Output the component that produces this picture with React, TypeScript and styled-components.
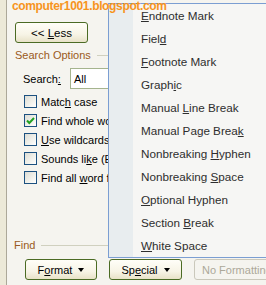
import React from "react";
import styled, { createGlobalStyle } from "styled-components";

const Global = createGlobalStyle`
  html, body { margin: 0; padding: 0; background: #f5f4ef; }
  * { box-sizing: border-box; }
`;

const Screen = styled.div`
  position: relative;
  width: 266px;
  height: 285px;
  overflow: hidden;
  display: flex;
  font-family: "Liberation Sans", Arial, sans-serif;
  background: #f5f4ef;
`;

const Strip = styled.div`
  width: 7px;
  flex: none;
  background: #ece9d8;
  border-right: 1px solid #aca899;
`;

const Dialog = styled.div`
  flex: 1;
  display: flex;
  flex-direction: column;
  padding-left: 8px;
  background: #f5f4ef;
  font-size: 10.5px;
  color: #000;
`;

const Watermark = styled.div`
  position: absolute;
  left: 12px;
  top: 0;
  font-family: "Liberation Sans", Arial, sans-serif;
  font-weight: bold;
  font-size: 12px;
  letter-spacing: -0.35px;
  line-height: 13px;
  color: #f7941d;
  z-index: 5;
`;

const Button = styled.div<{ $w: number; $disabled?: boolean }>`
  width: ${(p) => p.$w}px;
  height: 21px;
  flex: none;
  display: flex;
  align-items: center;
  justify-content: ${(p) => (p.$disabled ? "flex-start" : "center")};
  padding-left: ${(p) => (p.$disabled ? 7 : 0)}px;
  gap: 6px;
  border-radius: 3px;
  font-size: 11px;
  border: 1px solid ${(p) => (p.$disabled ? "#cac8bb" : "#4b6b24")};
  color: ${(p) => (p.$disabled ? "#aca899" : "#000")};
  background: ${(p) =>
    p.$disabled ? "#f5f4ef" : "linear-gradient(#fffef8 0%, #f7f4e6 60%, #e8e2c8 100%)"};
  white-space: nowrap;
  overflow: hidden;
`;

const U = styled.span`
  text-decoration: underline;
  text-underline-offset: 1px;
`;

const Arrow = styled.span`
  width: 0;
  height: 0;
  border-left: 3.5px solid transparent;
  border-right: 3.5px solid transparent;
  border-top: 4px solid #000;
  margin-top: 1px;
`;

const LessButton = styled(Button)`
  margin-top: 22px;
  font-size: 11.5px;
`;

const Heading = styled.div<{ $top: number; $inset: number }>`
  margin-top: ${(p) => p.$top}px;
  margin-left: ${(p) => p.$inset}px;
  height: 14px;
  display: flex;
  align-items: center;
  gap: 6px;
  color: #9a5a22;
  font-size: 11px;
  &::after {
    content: "";
    flex: 1;
    height: 1px;
    background: #d0d0bf;
  }
`;

const SearchRow = styled.div`
  margin-top: 6px;
  height: 21px;
  display: flex;
  align-items: center;
  padding-left: 8px;
`;

const SearchLabel = styled.span`
  width: 47px;
  font-size: 11px;
`;

const Select = styled.div`
  width: 120px;
  height: 21px;
  border: 1px solid #a5b48e;
  background: #fff;
  display: flex;
  align-items: center;
  padding-left: 3px;
  font-size: 11px;
`;

const CheckList = styled.div`
  margin-top: 3px;
  display: flex;
  flex-direction: column;
  padding-left: 9px;
`;

const CheckRow = styled.div`
  height: 19px;
  display: flex;
  align-items: center;
  gap: 4px;
  white-space: nowrap;
  font-size: 11px;
`;

const Box = styled.div`
  width: 13px;
  height: 13px;
  flex: none;
  border: 1px solid #1c5180;
  background: linear-gradient(135deg, #dcdcd5 0%, #f0f0ea 55%, #ffffff 100%);
  display: flex;
  align-items: center;
  justify-content: center;
`;

const ButtonRow = styled.div`
  margin-top: 7px;
  display: flex;
  padding-left: 10px;
  gap: 12px;
`;

const Menu = styled.div`
  position: absolute;
  left: 108px;
  top: 3px;
  width: 200px;
  border: 1px solid #7b9ed2;
  border-right: none;
  background: #f6f6f4;
  display: flex;
  z-index: 3;
`;

const IconColumn = styled.div`
  width: 24px;
  flex: none;
  background: #e8edef;
`;

const Items = styled.div`
  flex: 1;
  display: flex;
  flex-direction: column;
`;

const Item = styled.div`
  height: 23px;
  display: flex;
  align-items: center;
  padding-left: 8px;
  font-size: 11.7px;
  color: #2e2e2e;
  white-space: nowrap;
`;

const Check = () => (
  <svg width="9" height="8" viewBox="0 0 9 8">
    <path d="M1 3.5 L3.3 6 L8 1" fill="none" stroke="#21a121" strokeWidth="2" />
  </svg>
);

const label = (pre: string, key: string, post: string) => (
  <span>
    {pre}
    {key && <U>{key}</U>}
    {post}
  </span>
);

const menuItems: [string, string, string][] = [
  ["", "E", "ndnote Mark"],
  ["Fiel", "d", ""],
  ["", "F", "ootnote Mark"],
  ["Graph", "i", "c"],
  ["Manual ", "L", "ine Break"],
  ["Manual Page Brea", "k", ""],
  ["Nonbreaking ", "H", "yphen"],
  ["Nonbreaking ", "S", "pace"],
  ["", "O", "ptional Hyphen"],
  ["Section ", "B", "reak"],
  ["", "W", "hite Space"],
];

const checks: { parts: [string, string, string]; on?: boolean }[] = [
  { parts: ["Matc", "h", " case"] },
  { parts: ["Find whole words only", "", ""], on: true },
  { parts: ["", "U", "se wildcards"] },
  { parts: ["Sounds li", "k", "e (English)"] },
  { parts: ["Find all ", "w", "ord forms (English)"] },
];

export default function App() {
  return (
    <Screen>
      <Global />
      <Watermark>computer1001.blogspot.com</Watermark>
      <Strip />
      <Dialog>
        <LessButton $w={73}>{label("<< ", "L", "ess")}</LessButton>
        <Heading $top={5} $inset={0}>Search Options</Heading>
        <SearchRow>
          <SearchLabel>{label("Search", ":", "")}</SearchLabel>
          <Select>All</Select>
        </SearchRow>
        <CheckList>
          {checks.map((c, i) => (
            <CheckRow key={i}>
              <Box>{c.on && <Check />}</Box>
              {label(...c.parts)}
            </CheckRow>
          ))}
        </CheckList>
        <Heading $top={51} $inset={-1}>Find</Heading>
        <ButtonRow>
          <Button $w={72}>
            {label("F", "o", "rmat")}
            <Arrow />
          </Button>
          <Button $w={73}>
            {label("Sp", "e", "cial")}
            <Arrow />
          </Button>
          <Button $w={95} $disabled>
            No Formatting
          </Button>
        </ButtonRow>
      </Dialog>
      <Menu>
        <IconColumn />
        <Items>
          {menuItems.map((m, i) => (
            <Item key={i}>{label(...m)}</Item>
          ))}
        </Items>
      </Menu>
    </Screen>
  );
}
